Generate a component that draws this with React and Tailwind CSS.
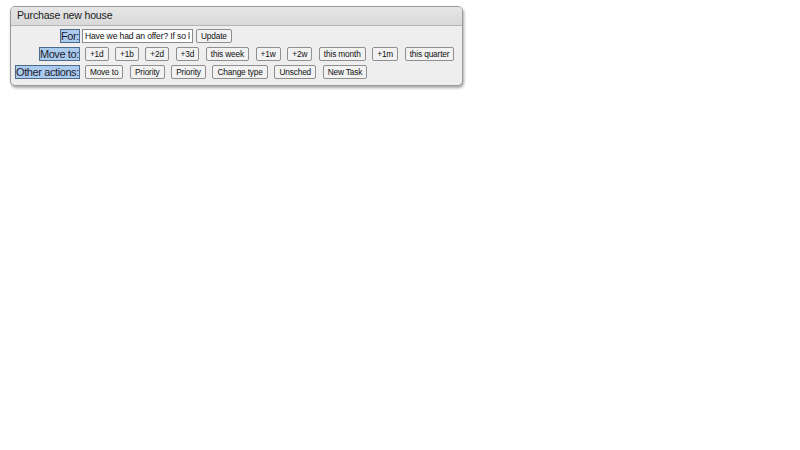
const moveTargets = ['+1d', '+1b', '+2d', '+3d', 'this week', '+1w', '+2w', 'this month', '+1m', 'this quarter'];
const otherActions = ['Move to', 'Priority', 'Priority', 'Change type', 'Unsched', 'New Task'];

function SmallButton({ children }) {
  return (
    <button
      type="button"
      className="h-[14px] whitespace-nowrap rounded-[2px] border border-[#8f8f8f] bg-[#f2f2f2] px-[4px] text-[8.3px] leading-[12px] tracking-[-0.15px] text-[#111]"
    >
      {children}
    </button>
  );
}

function Label({ children }) {
  return (
    <div className="flex h-[14px] justify-end">
      <span className="block h-[14px] whitespace-nowrap border border-[#4d6a8c] bg-[#abcbee] text-[11px] leading-[12px] tracking-[-0.4px] text-[#1d2230]">
        {children}
      </span>
    </div>
  );
}

export default function App() {
  return (
    <div className="min-h-screen bg-white pl-[10px] pt-[6px]" style={{ fontFamily: '"Liberation Sans", Arial, sans-serif' }}>
      <div className="w-[453px] overflow-hidden rounded-[5px] border border-[#9a9a9a] bg-[#eeeeee] shadow-[1px_2px_3px_rgba(0,0,0,0.35)]">
        <div className="flex h-[19px] items-center border-b border-[#b4b4b4] bg-gradient-to-b from-[#e6e6e6] to-[#d9d9d9] px-[6px] text-[10.6px] tracking-[-0.2px] text-[#222]">
          Purchase new house
        </div>

        <div className="grid grid-cols-[auto_1fr] gap-x-[2px] gap-y-[4px] pb-[6px] pl-[4px] pt-[3px]">
          <Label>For:</Label>
          <div className="flex h-[14px] items-center gap-[3px]">
            <input
              className="h-[14px] w-[111px] border border-[#8a8a8a] bg-white px-[2px] text-[8.6px] tracking-[-0.15px] text-[#111] outline-none"
              defaultValue="Have we had an offer? If so let us know"
            />
            <SmallButton>Update</SmallButton>
          </div>

          <Label>Move to:</Label>
          <div className="flex h-[14px] items-center gap-[6.6px] pl-[3px]">
            {moveTargets.map((target) => (
              <SmallButton key={target}>{target}</SmallButton>
            ))}
          </div>

          <Label>Other actions:</Label>
          <div className="flex h-[14px] items-center gap-[6.6px] pl-[3px]">
            {otherActions.map((action, index) => (
              <SmallButton key={index}>{action}</SmallButton>
            ))}
          </div>
        </div>
      </div>
    </div>
  );
}
